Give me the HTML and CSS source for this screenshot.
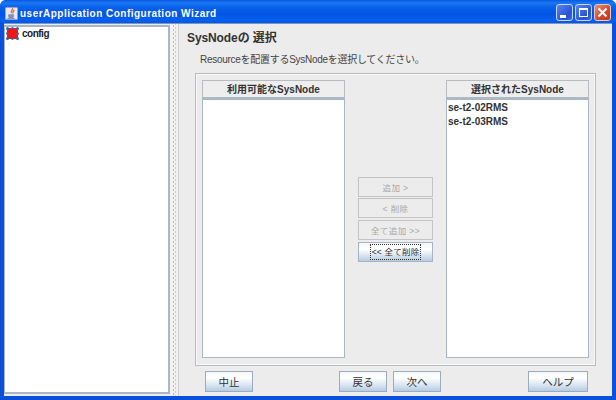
FILE: index.html
```html
<!DOCTYPE html>
<html lang="ja">
<head>
<meta charset="utf-8">
<title>userApplication Configuration Wizard</title>
<link rel="stylesheet" href="styles.css">
</head>
<body>
<div class="window">
  <header class="titlebar">
    <svg class="app-icon" width="13" height="13" viewBox="0 0 16 16">
      <rect x="0.5" y="0.5" width="15" height="15" rx="1.5" fill="#e8e8f0" stroke="#9aa4c8"/>
      <path d="M9 1.500c1.500 2-2.500 3-1 6M11 3.500c0 2-2 2.500-1 4.500" stroke="#e8642a" stroke-width="1.600" fill="none"/>
      <path d="M4 9h7v2.500a2 2 0 0 1-2 2H6a2 2 0 0 1-2-2z" fill="#7f90ba"/>
      <path d="M3 14h9" stroke="#5f6f9c"/>
    </svg>
    <span class="title-text">userApplication Configuration Wizard</span>
    <div class="win-buttons">
      <div class="win-btn"><svg width="17" height="17" viewBox="0 0 17 17"><rect x="4" y="11" width="6" height="3" fill="#fff"/></svg></div>
      <div class="win-btn"><svg width="17" height="17" viewBox="0 0 17 17"><rect x="4.500" y="4.500" width="8" height="8" fill="none" stroke="#fff"/><rect x="4" y="4" width="9" height="2" fill="#fff"/></svg></div>
      <div class="win-btn win-close"><svg width="17" height="17" viewBox="0 0 17 17"><path d="M4.500 4.500l8 8M12.500 4.500l-8 8" stroke="#fff" stroke-width="2"/></svg></div>
    </div>
  </header>
  <div class="client">
    <aside class="tree">
      <div class="tree-row">
        <svg class="tree-icon" width="13" height="13" viewBox="0 0 13 13">
          <rect x="1" y="1" width="11" height="11" fill="#f41414"/>
          <g fill="#2f6aa4"><circle cx="1.500" cy="1.500" r="1.500"/><circle cx="6.500" cy="1.200" r="1.200"/><circle cx="11.500" cy="1.500" r="1.500"/><circle cx="1.200" cy="6.500" r="1.200"/><circle cx="11.800" cy="6.500" r="1.200"/><circle cx="1.500" cy="11.500" r="1.500"/><circle cx="6.500" cy="11.800" r="1.200"/><circle cx="11.500" cy="11.500" r="1.500"/></g>
        </svg>
        <span>config</span>
      </div>
    </aside>
    <div class="splitter"></div>
    <main class="pane">
      <h1 class="heading">SysNodeの 選択</h1>
      <p class="desc">Resourceを配置するSysNodeを選択してください。</p>
      <section class="group">
        <div class="column">
          <div class="col-head">利用可能なSysNode</div>
          <div class="list"></div>
        </div>
        <div class="transfer">
          <button class="btn-small" disabled>追加 &gt;</button>
          <button class="btn-small" disabled>&lt; 削除</button>
          <button class="btn-small gap-extra" disabled>全て追加 &gt;&gt;</button>
          <button class="btn-small btn-active gap-extra"><span class="focus">&lt;&lt; 全て削除</span></button>
        </div>
        <div class="column">
          <div class="col-head">選択されたSysNode</div>
          <div class="list">
            <div class="item">se-t2-02RMS</div>
            <div class="item">se-t2-03RMS</div>
          </div>
        </div>
      </section>
      <footer class="actions">
        <button class="btn btn-cancel">中止</button>
        <button class="btn btn-back">戻る</button>
        <button class="btn btn-next">次へ</button>
        <button class="btn btn-help">ヘルプ</button>
      </footer>
    </main>
  </div>
</div>
</body>
</html>
```
FILE: styles.css
```css
* { box-sizing: border-box; }
html, body { margin: 0; padding: 0; }
body {
  width: 616px;
  height: 400px;
  overflow: hidden;
  font-family: "Liberation Sans", "Noto Sans CJK JP", sans-serif;
  color: #333;
}
.window {
  width: 616px;
  height: 400px;
  display: flex;
  flex-direction: column;
  background: #0a50dc;
  border-radius: 6px 6px 0 0;
  overflow: hidden;
}
.titlebar {
  height: 23px;
  flex: none;
  display: flex;
  align-items: center;
  padding: 3px 5px 0;
  background: linear-gradient(#0a58e0 0, #1a78f4 3px, #0a62ea 7px, #0454e4 14px, #0460f0 20px, #0458e4 23px);
  color: #fff;
}
.app-icon { flex: none; margin-right: 2px; }
.title-text {
  font-size: 10px;
  font-weight: bold;
  letter-spacing: 0.48px;
  white-space: nowrap;
}
.win-buttons { margin-left: auto; display: flex; gap: 2px; margin-bottom: 1px; }
.win-btn {
  width: 17px;
  height: 17px;
  border: 1px solid #c8d8f8;
  border-radius: 3px;
  background: linear-gradient(135deg, #5a86ec, #2850d4 70%, #3c68e0);
  display: flex;
  overflow: hidden;
}
.win-btn svg { flex: none; margin: -1px; }
.win-close { background: linear-gradient(135deg, #e89078, #d0482c 60%, #c03818); border-color: #e8c8c0; }
.client {
  flex: 1;
  min-height: 0;
  margin: 0 4px 4px;
  background: #ececec;
  display: flex;
  border-top: 1px solid #7f96b8;
}
.tree {
  width: 166px;
  margin: 1px 0 2px 0;
  background: #fff;
  border-style: solid;
  border-width: 2px 2px 2px 1px;
  border-color: #a9b6c6;
  padding: 0 0 0 1px;
  flex: none;
}
.tree-row {
  display: flex;
  align-items: center;
  gap: 3px;
  height: 13px;
  font-size: 10px;
  font-weight: bold;
  letter-spacing: -0.5px;
  color: #222;
}
.tree-icon { flex: none; }
.splitter {
  width: 9px;
  flex: none;
  border-right: 1px solid #d0d0d0;
  background-image: radial-gradient(#b4b8bc 45%, transparent 50%), radial-gradient(#c8ccd0 45%, transparent 50%);
  background-size: 3px 4px, 3px 4px;
  background-position: 2px 0, 4px 2px;
  background-repeat: repeat-y, repeat-y;
  background-color: #f2f2f2;
}
.pane {
  flex: 1;
  min-width: 0;
  padding: 7px 0 0 8px;
  display: flex;
  flex-direction: column;
}
.heading {
  margin: 0;
  font-size: 12px;
  line-height: 14px;
  font-weight: bold;
  letter-spacing: -0.1px;
  color: #333;
}
.desc {
  margin: 8px 0 0 13px;
  font-size: 10px;
  letter-spacing: -0.28px;
  line-height: 14px;
  color: #444;
  white-space: nowrap;
}
.group {
  margin: 6px 0 0 8px;
  width: 401px;
  height: 293px;
  flex: none;
  border: 1px solid #b8bcc0;
  outline: 1px solid #f8f8f8;
  outline-offset: -2px;
  padding: 6px 6px 7px 6px;
  display: flex;
  justify-content: space-between;
  align-items: stretch;
}
.column { width: 143px; display: flex; flex-direction: column; }
.col-head {
  height: 19px;
  flex: none;
  border: 1px solid #b8bcc0;
  border-bottom: 2px solid #b0b8c4;
  background: #eeeeee;
  font-size: 10px;
  font-weight: bold;
  line-height: 17px;
  text-align: center;
  color: #333;
}
.list {
  flex: 1;
  background: #fff;
  border: 1px solid #a9b6c6;
  padding-top: 1px;
}
.item {
  font-size: 10px;
  font-weight: bold;
  line-height: 14px;
  padding-left: 1px;
  color: #333;
}
.transfer {
  width: 75px;
  display: flex;
  flex-direction: column;
  justify-content: flex-start;
  gap: 1px;
  padding-top: 97px;
}
button { font-family: inherit; padding: 0; margin: 0; cursor: default; }
.btn-small {
  width: 75px;
  height: 20px;
  flex: none;
  font-size: 8.500px;
  border: 1px solid #c4c4c4;
  background: #ececec;
  color: #a8a8a8;
  letter-spacing: 0.4px;
}
.gap-extra { margin-top: 1px; }
.btn-active {
  border-color: #a8b4c4;
  color: #333;
  background: linear-gradient(#f4f6fa, #ffffff 35%, #d8e4f0 70%, #b4cce4);
  display: flex;
  align-items: center;
  justify-content: center;
}
.focus {
  border: 1px dotted #333;
  padding: 0 1px;
  line-height: 14px;
  letter-spacing: 0.2px;
}
.actions {
  height: 22px;
  margin-top: 5px;
  display: flex;
  padding-left: 18px;
}
.btn {
  height: 21px;
  flex: none;
  font-size: 10.500px;
  border: 1px solid #9cacbc;
  color: #333;
  background: linear-gradient(#f4f6fa, #ffffff 30%, #d8e4f0 70%, #b4cce4);
}
.btn-cancel { width: 48px; }
.btn-back { width: 48px; margin-left: 86px; }
.btn-next { width: 48px; margin-left: 6px; }
.btn-help { width: 60px; margin-left: 87px; }
```
